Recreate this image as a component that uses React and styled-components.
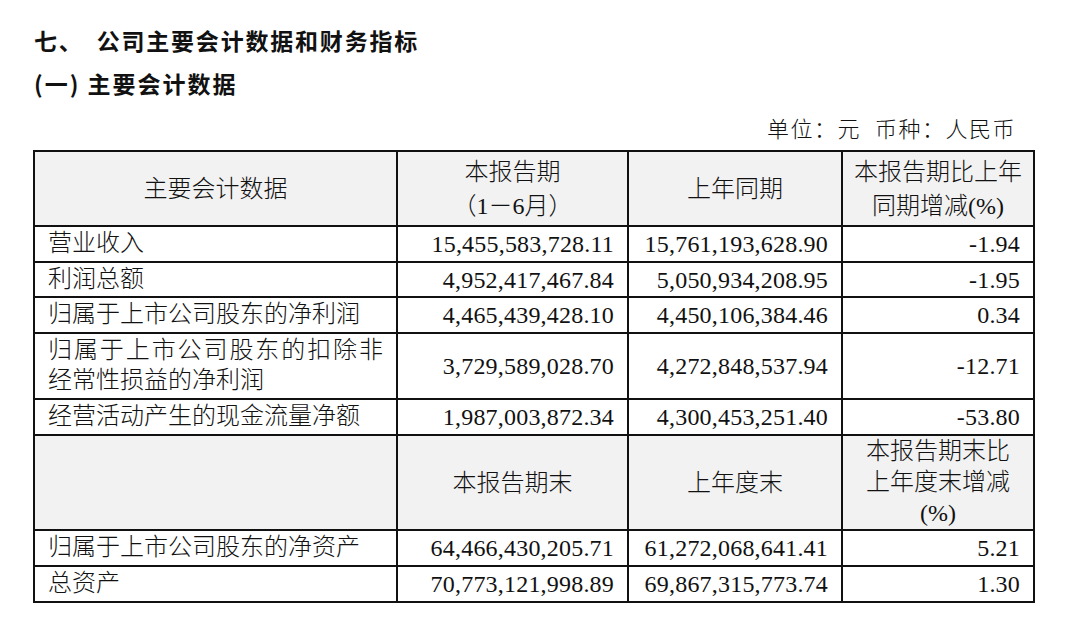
import React from "react";
import styled, { createGlobalStyle } from "styled-components";

const GlobalStyle = createGlobalStyle`
    html, body {
        margin: 0;
        padding: 0;
        background: #ffffff;
    }
    body {
        font-family: "Liberation Serif", "Noto Sans CJK SC", serif;
        color: #111111;
    }
`;

const cjk = `"Liberation Serif", "Noto Sans CJK SC", serif`;

const Page = styled.div`
    width: 1080px;
    height: 622px;
    box-sizing: border-box;
    padding: 23px 47px 0 33px;
    overflow: hidden;
`;

const Heading = styled.h1`
    margin: 0;
    padding-left: 1px;
    font-family: "Noto Sans CJK SC", sans-serif;
    font-size: 23px;
    font-weight: 700;
    line-height: 34px;
    letter-spacing: 1.8px;
    color: #111;
`;

const SectionNo = styled.span`
    margin-right: 6px;
`;

const SubHeading = styled(Heading)`
    margin-top: 9px;
    letter-spacing: 2px;
`;

const UnitLine = styled.div`
    margin-top: 15px;
    padding-right: 17px;
    text-align: right;
    font-family: ${cjk};
    font-weight: 300;
    font-size: 22px;
    line-height: 30px;
    letter-spacing: 1.5px;
`;

const Table = styled.table`
    margin-top: 5px;
    width: 1000px;
    border-collapse: collapse;
    table-layout: fixed;
    border: 2px solid #111;
`;

const Cell = styled.td`
    border: 2px solid #111;
    padding: 0 13px;
    font-family: ${cjk};
    font-weight: 300;
    font-size: 24px;
    line-height: 30px;
    vertical-align: middle;
`;

const HeadCell = styled(Cell)`
    background: #f2f2f2;
    text-align: center;
    padding: 0 6px;
    line-height: ${(p) => p.$lh || 32}px;
`;

const LabelCell = styled(Cell)`
    text-align: ${(p) => (p.$justify ? "justify" : "left")};
    padding-bottom: 2px;
`;

const NumCell = styled(Cell)`
    text-align: right;
    font-family: "Liberation Serif", serif;
    font-weight: 400;
    letter-spacing: 0.2px;
`;

const Row = styled.tr`
    height: ${(p) => p.$h}px;
`;

const periodRows = [
    { label: "营业收入", cur: "15,455,583,728.11", prev: "15,761,193,628.90", pct: "-1.94", h: 36 },
    { label: "利润总额", cur: "4,952,417,467.84", prev: "5,050,934,208.95", pct: "-1.95", h: 35 },
    { label: "归属于上市公司股东的净利润", cur: "4,465,439,428.10", prev: "4,450,106,384.46", pct: "0.34", h: 36 },
    { label: "归属于上市公司股东的扣除非经常性损益的净利润", cur: "3,729,589,028.70", prev: "4,272,848,537.94", pct: "-12.71", h: 66, justify: true },
    { label: "经营活动产生的现金流量净额", cur: "1,987,003,872.34", prev: "4,300,453,251.40", pct: "-53.80", h: 36 },
];

const endRows = [
    { label: "归属于上市公司股东的净资产", cur: "64,466,430,205.71", prev: "61,272,068,641.41", pct: "5.21", h: 36 },
    { label: "总资产", cur: "70,773,121,998.89", prev: "69,867,315,773.74", pct: "1.30", h: 36 },
];

const DataRow = ({ row }) => (
    <Row $h={row.h}>
        <LabelCell $justify={row.justify}>{row.label}</LabelCell>
        <NumCell>{row.cur}</NumCell>
        <NumCell>{row.prev}</NumCell>
        <NumCell>{row.pct}</NumCell>
    </Row>
);

const App = () => {
    return (
        <Page>
            <GlobalStyle />
            <Heading><SectionNo>七、</SectionNo> 公司主要会计数据和财务指标</Heading>
            <SubHeading>(一) 主要会计数据</SubHeading>
            <UnitLine>单位：元&nbsp;&nbsp;币种：人民币</UnitLine>
            <Table>
                <colgroup>
                    <col style={{ width: 363 }} />
                    <col style={{ width: 231 }} />
                    <col style={{ width: 214 }} />
                    <col style={{ width: 192 }} />
                </colgroup>
                <tbody>
                    <Row $h={75}>
                        <HeadCell>主要会计数据</HeadCell>
                        <HeadCell $lh={34}>本报告期<br />（1－6月）</HeadCell>
                        <HeadCell>上年同期</HeadCell>
                        <HeadCell $lh={34}>本报告期比上年<br />同期增减(%)</HeadCell>
                    </Row>
                    {periodRows.map((r) => (
                        <DataRow key={r.label} row={r} />
                    ))}
                    <Row $h={95}>
                        <HeadCell />
                        <HeadCell>本报告期末</HeadCell>
                        <HeadCell>上年度末</HeadCell>
                        <HeadCell $lh={31}>本报告期末比<br />上年度末增减<br />(%)</HeadCell>
                    </Row>
                    {endRows.map((r) => (
                        <DataRow key={r.label} row={r} />
                    ))}
                </tbody>
            </Table>
        </Page>
    );
};

export default App;
